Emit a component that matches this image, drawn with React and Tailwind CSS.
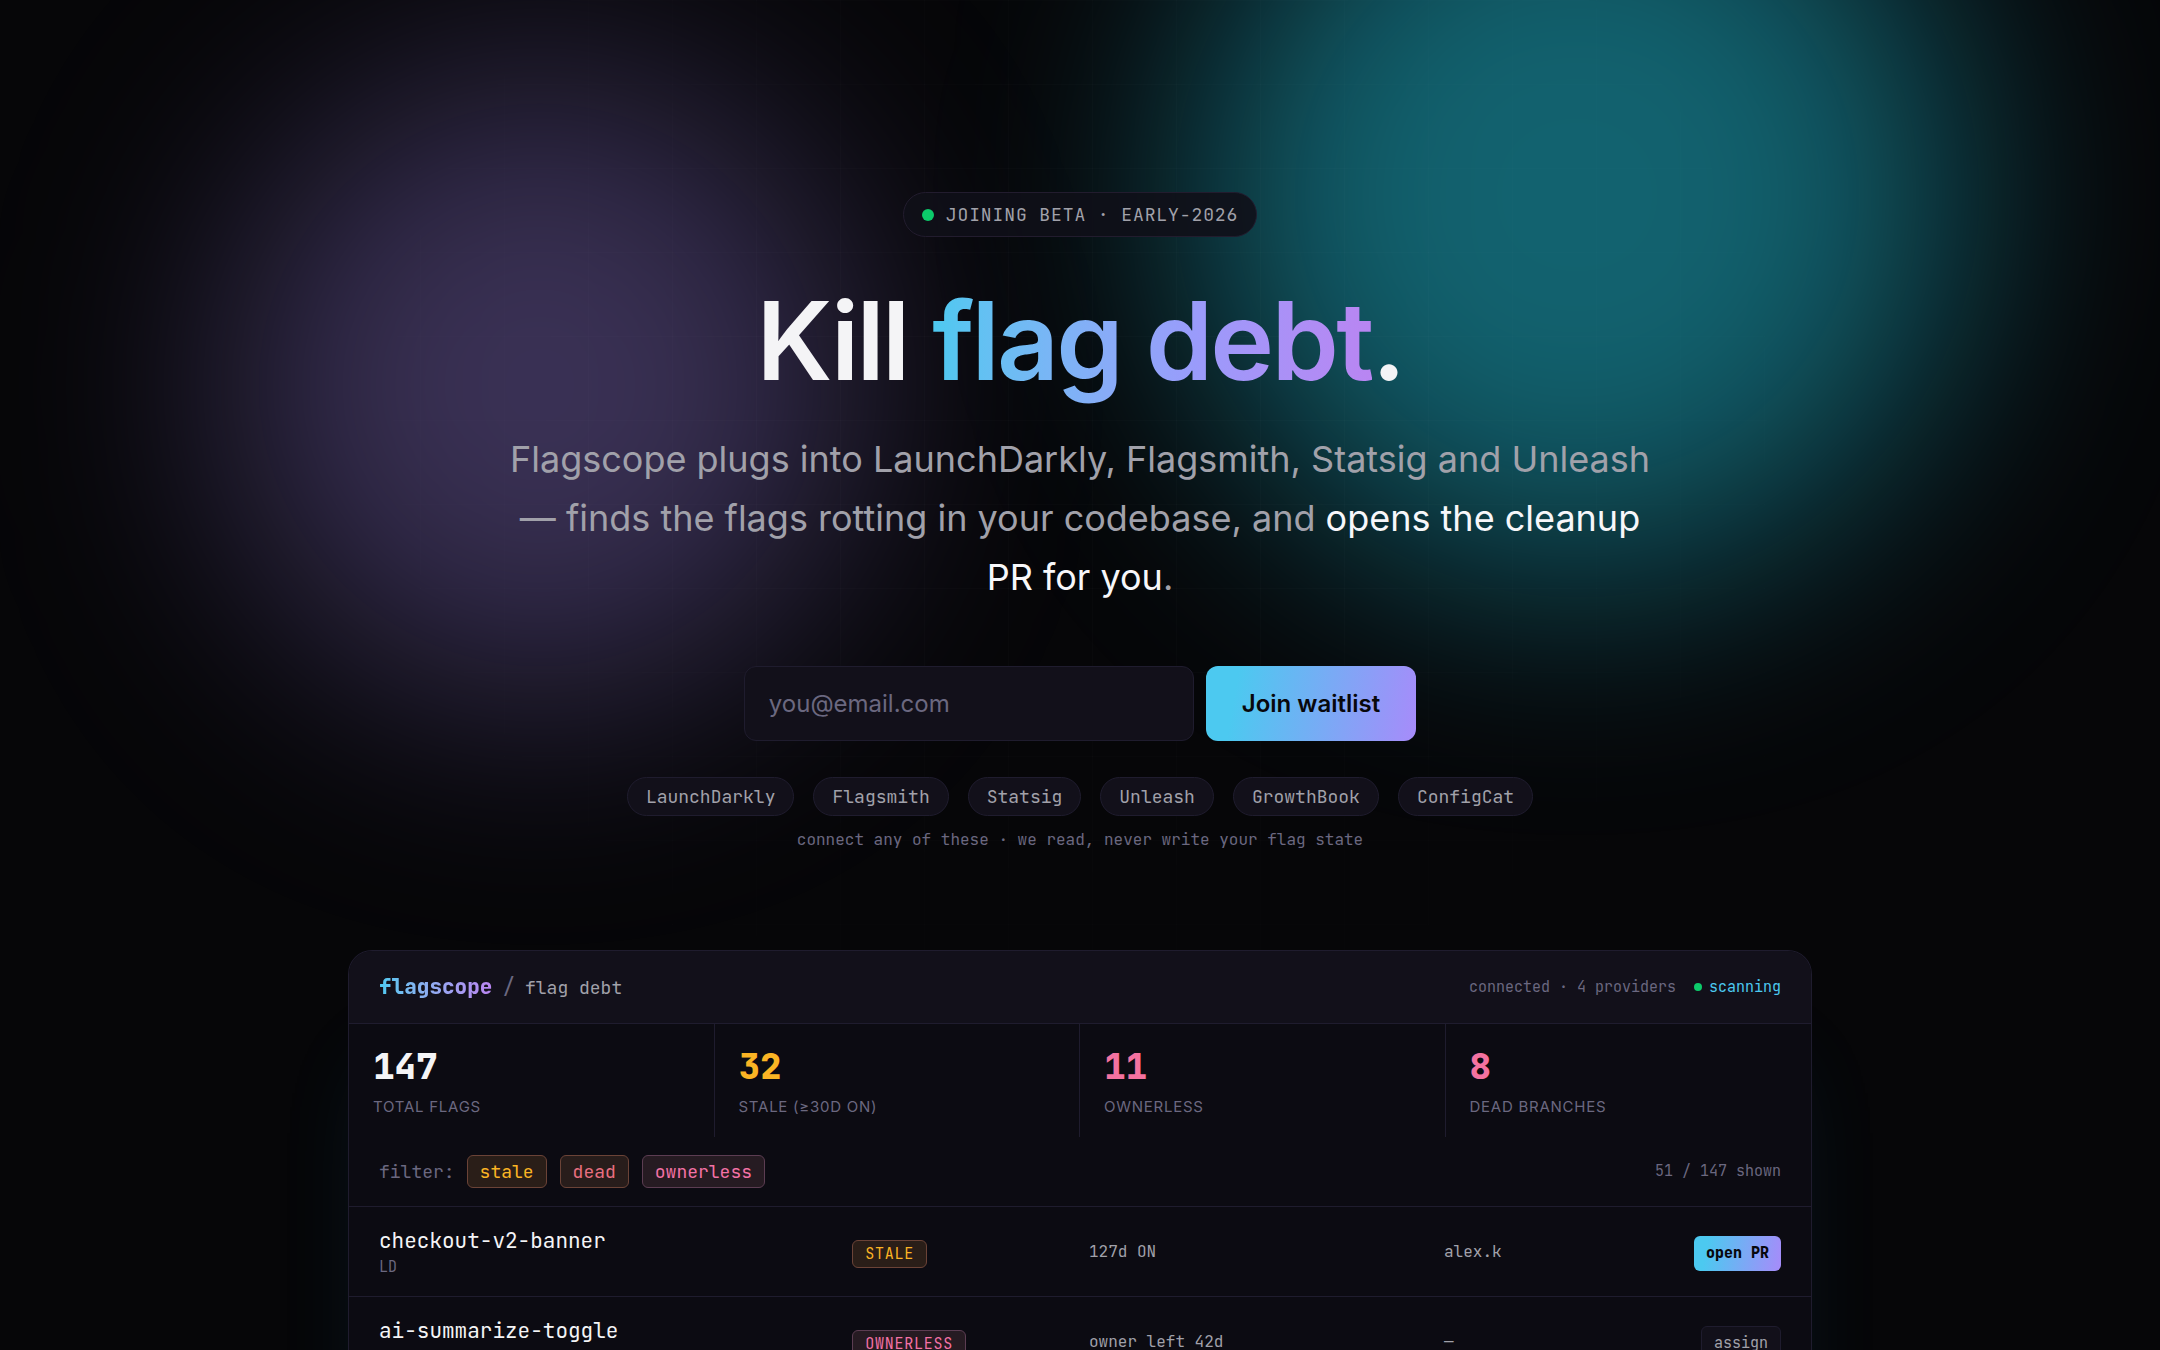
const PROVIDERS = ["LaunchDarkly", "Flagsmith", "Statsig", "Unleash", "GrowthBook", "ConfigCat"];

const STATS = [
    { value: "147", label: "TOTAL FLAGS", color: "text-[#f4f4f6]" },
    { value: "32", label: "STALE (≥30D ON)", color: "text-[#fbb424]" },
    { value: "11", label: "OWNERLESS", color: "text-[#f472a0]" },
    { value: "8", label: "DEAD BRANCHES", color: "text-[#f472a0]" },
];

const FILTERS = [
    { label: "stale", style: "text-[#fbb424] bg-[#2a1e18] border-[#6b4337]" },
    { label: "dead", style: "text-[#e86f80] bg-[#281d1b] border-[#6b4337]" },
    { label: "ownerless", style: "text-[#f472a6] bg-[#261b22] border-[#5c3d52]" },
];

const FLAGS = [
    {
        name: "checkout-v2-banner",
        provider: "LD",
        status: "STALE",
        statusStyle: "text-[#fbb424] bg-[#2a1e18] border-[#6b4337]",
        note: "127d ON",
        owner: "alex.k",
        action: "open PR",
        primary: true,
    },
    {
        name: "ai-summarize-toggle",
        status: "OWNERLESS",
        statusStyle: "text-[#f472a6] bg-[#261b22] border-[#5c3d52]",
        note: "owner left 42d",
        owner: "—",
        action: "assign",
        primary: false,
    },
];

const MONO = "font-['JetBrains_Mono','DejaVu_Sans_Mono',monospace]";

function Backdrop() {
    return (
        <div className="absolute inset-0 overflow-hidden pointer-events-none" aria-hidden="true">
            <div className="absolute left-1/4 top-[385px] size-[620px] -translate-x-1/2 -translate-y-1/2 rounded-full bg-[#a78bfa]/32 blur-[120px]" />
            <div className="absolute left-[73%] top-[195px] size-[760px] -translate-x-1/2 -translate-y-1/2 rounded-full bg-[#22d3ee]/45 blur-[120px]" />
            <div className="absolute inset-0 bg-[linear-gradient(to_right,rgba(255,255,255,0.015)_1px,transparent_1px),linear-gradient(to_bottom,rgba(255,255,255,0.015)_1px,transparent_1px)] bg-[size:84px_84px] mask-[radial-gradient(ellipse_at_50%_30%,black_20%,transparent_60%)]" />
        </div>
    );
}

function Hero() {
    return (
        <section className="relative flex flex-col items-center px-9 pt-48 text-center">
            <div className={`flex items-center gap-3 h-[45px] px-[18px] rounded-full border border-[#221c2e] bg-[#100f18]/90 text-[18px] tracking-wider text-[#a1a1aa] ${MONO}`}>
                <span className="size-3 rounded-full bg-[#0cca6a]" />
                JOINING BETA · EARLY-2026
            </div>

            <h1 className="mt-9 text-[108px] leading-[136px] font-semibold tracking-tight text-[#f4f4f6]">
                Kill{" "}
                <span className="bg-linear-to-r from-[#4cc9f0] via-[#9a9bfb] via-60% to-[#b985f2] bg-clip-text text-transparent">flag debt</span>.
            </h1>

            <p className="mt-[21px] max-w-6xl text-[36px] leading-[59px] text-[#a1a1aa]">
                Flagscope plugs into LaunchDarkly, Flagsmith, Statsig and Unleash — finds the flags rotting in your
                codebase, and <span className="text-[#f7f7fa]">opens the cleanup PR for you</span>.
            </p>

            <form className="mt-[59px] flex gap-3" onSubmit={(e) => e.preventDefault()}>
                <input
                    type="email"
                    aria-label="Email"
                    placeholder="you@email.com"
                    className="w-[450px] h-[75px] px-6 rounded-xl border border-[#1f1c2e] bg-[#12101a] text-[24px] text-[#f4f4f6] placeholder:text-[#6b6880] outline-none"
                />
                <button
                    type="submit"
                    className="h-[75px] px-9 rounded-xl bg-linear-[100deg] from-[#4cc9f0] from-15% to-[#a78bfa] text-[24px] font-semibold text-[#08080c]"
                >
                    Join waitlist
                </button>
            </form>

            <ul className={`mt-9 flex flex-wrap justify-center gap-[19px] text-[18px] text-[#a1a1aa] ${MONO}`}>
                {PROVIDERS.map((p) => (
                    <li key={p} className="flex items-center h-[39px] px-[18px] rounded-full border border-[#1f1c2e] bg-[#12101a]">
                        {p}
                    </li>
                ))}
            </ul>
            <p className={`mt-3 text-[16px] leading-6 text-[#6b6880] ${MONO}`}>
                connect any of these · we read, never write your flag state
            </p>
        </section>
    );
}

function FlagRow({ flag }) {
    return (
        <tr className="grid grid-cols-12 items-center gap-[18px] px-[30px] py-[18px] border-t border-[#1f1c2e]">
            <td className="col-span-4">
                <div className="text-[21px] leading-8 text-[#f4f4f6]">{flag.name}</div>
                <div className="h-[21px] text-[15px] leading-[21px] text-[#6b6880]">{flag.provider}</div>
            </td>
            <td className="col-span-2 flex pt-1">
                <span className={`px-3 rounded-md border text-[15px] leading-[26px] tracking-wider ${flag.statusStyle}`}>
                    {flag.status}
                </span>
            </td>
            <td className="col-span-3 text-[16px] text-[#a1a1aa]">{flag.note}</td>
            <td className="col-span-2 text-[16px] text-[#a1a1aa]">{flag.owner}</td>
            <td className="flex justify-end pt-1">
                {flag.primary ? (
                    <button className="h-[35px] px-3 rounded-md bg-linear-[100deg] from-[#4cc9f0] from-15% to-[#a78bfa] text-[15px] font-extrabold whitespace-nowrap text-[#08080c]">
                        {flag.action}
                    </button>
                ) : (
                    <button className="h-[35px] px-3 rounded-md border border-[#1f1c2e] bg-[#12101a] text-[15px] text-[#a1a1aa]">
                        {flag.action}
                    </button>
                )}
            </td>
        </tr>
    );
}

function Dashboard() {
    return (
        <section className="relative mx-auto mt-[98px] max-w-[1536px] px-9">
            <div className={`overflow-hidden rounded-t-3xl border border-b-0 border-[#1f1c2e] bg-[#0c0b12] shadow-[0_90px_90px_-30px_rgba(40,160,220,0.15)] ${MONO}`}>
                <header className="flex items-center justify-between h-[73px] px-[30px] border-b border-[#1f1c2e] bg-[#12101a]">
                    <div className="flex items-center gap-[10px] text-[21px]">
                        <span className="bg-linear-to-r from-[#4cc9f0] to-[#b985f2] bg-clip-text font-extrabold text-transparent">flagscope</span>
                        <span className="text-[#6b6880]">/</span>
                        <span className="text-[18px] text-[#a1a1aa]">flag debt</span>
                    </div>
                    <div className="flex items-center gap-[18px] text-[15px] text-[#6b6880]">
                        connected · 4 providers
                        <span className="flex items-center gap-[7px] text-[#4cc9f0]">
                            <span className="size-2 rounded-full bg-[#0cca6a]" />
                            scanning
                        </span>
                    </div>
                </header>

                <dl className="grid grid-cols-4 divide-x divide-[#1f1c2e]">
                    {STATS.map((s) => (
                        <div key={s.label} className="flex flex-col-reverse px-6 py-[18px]">
                            <dt className="mt-[5px] font-[Inter,sans-serif] text-[15px] leading-6 tracking-wider text-[#6b6880]">{s.label}</dt>
                            <dd className={`text-[36px] leading-[48px] font-extrabold ${s.color}`}>{s.value}</dd>
                        </div>
                    ))}
                </dl>

                <div className="flex items-center gap-3 h-[69px] px-[30px] text-[18px]">
                    <span className="text-[#6b6880]">filter:</span>
                    <div className="flex gap-[13px]">
                        {FILTERS.map((f) => (
                            <button key={f.label} className={`h-[33px] px-3 rounded-md border ${f.style}`}>
                                {f.label}
                            </button>
                        ))}
                    </div>
                    <span className="ml-auto text-[15px] text-[#6b6880]">51 / 147 shown</span>
                </div>

                <table className="block w-full text-left">
                    <tbody className="block">
                        {FLAGS.map((f) => (
                            <FlagRow key={f.name} flag={f} />
                        ))}
                    </tbody>
                </table>
            </div>
        </section>
    );
}

export default function App() {
    return (
        <main className="relative h-screen overflow-hidden bg-[#060608] font-[Inter,sans-serif] antialiased">
            <Backdrop />
            <Hero />
            <Dashboard />
        </main>
    );
}
